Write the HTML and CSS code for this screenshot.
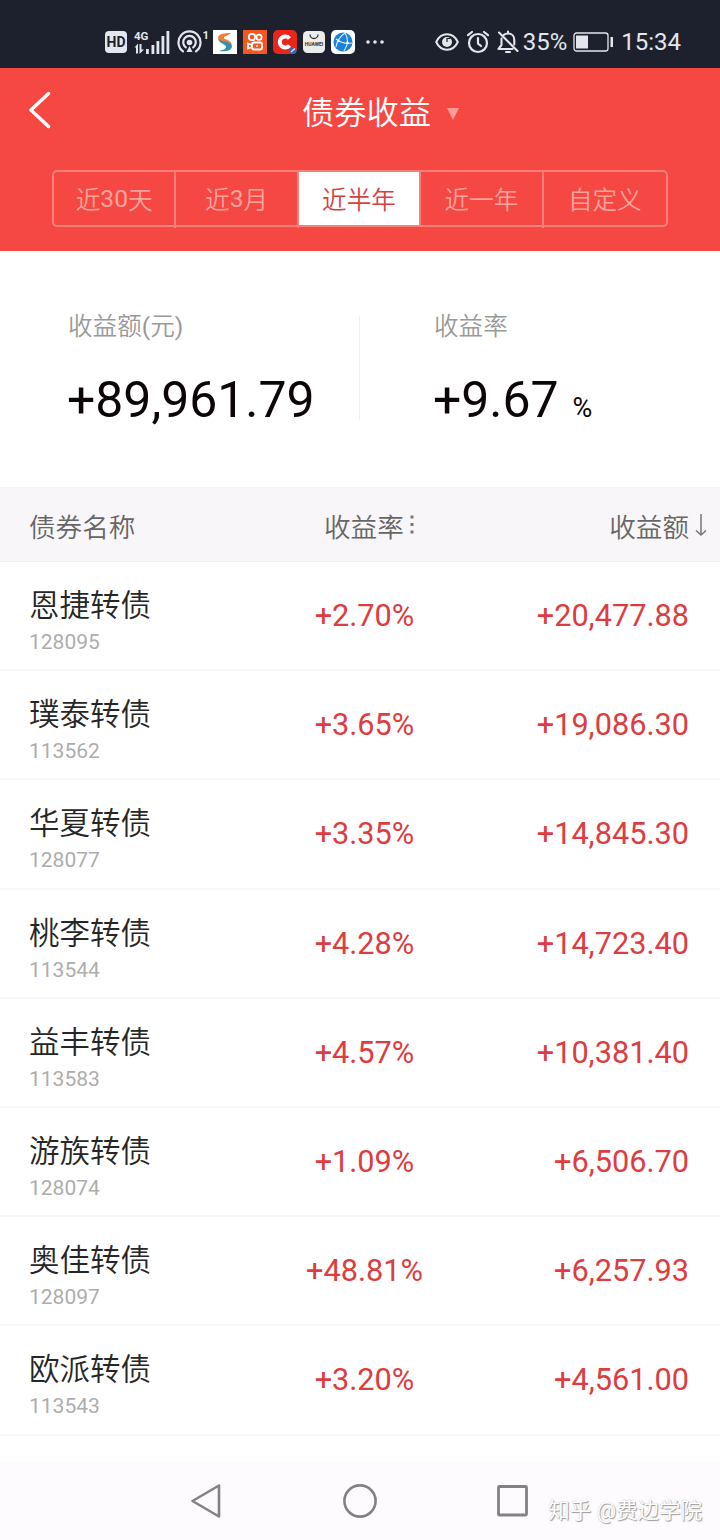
FILE: index.html
```html
<!DOCTYPE html>
<html lang="zh-CN">
<head>
    <meta charset="UTF-8">
    <meta name="viewport" content="width=device-width, initial-scale=1.0">
    <title>债券收益</title>
    <link rel="stylesheet" href="styles.css">
</head>
<body>

    <div class="status-bar">
        <div class="status-left">
            <svg width="22" height="22" viewBox="0 0 22 22">
                <rect width="22" height="22" rx="4" fill="#e4e6ee"/>
                <text x="11" y="16.2" class="hd-text">HD</text>
            </svg>
            <svg class="signal" width="38" height="26" viewBox="0 0 38 26">
                <text x="0" y="10.5" class="net-text">4G</text>
                <g fill="#e4e6ee">
                    <path d="M0.500 18.500L4 14.500V24.500H2V18.500zM5.500 15H7.500v5.500H10L5.500 25z"/>
                    <rect x="12" y="20" width="2.800" height="5"/>
                    <rect x="17.500" y="16" width="2.800" height="9"/>
                    <rect x="22.500" y="12" width="2.800" height="13"/>
                    <rect x="27.500" y="7" width="2.800" height="18"/>
                    <rect x="32.500" y="2" width="2.800" height="23"/>
                </g>
            </svg>
            <svg class="hotspot" width="32" height="26" viewBox="0 0 32 26">
                <g fill="none" stroke="#e4e6ee" stroke-width="2.200" stroke-linecap="round">
                    <path d="M6 22.300a11 11 0 1 1 13 0"/>
                    <path d="M8.800 18.300a6.300 6.300 0 1 1 7.400 0"/>
                </g>
                <circle cx="12.500" cy="13.500" r="2.800" fill="#e4e6ee"/>
                <path d="M12.500 17l3 6h-6z" fill="#e4e6ee"/>
                <text x="25.500" y="10" class="net-text">1</text>
            </svg>
            <svg class="app" width="24" height="24" viewBox="0 0 24 24">
                <rect width="24" height="24" fill="#fff"/>
                <path d="M18 3C11 3 5 4 5 8c0 4 8 3 14 7-1-6-8-5-8-7s4-2 7-5z" fill="#f08038"/>
                <path d="M5 9c4 3 13 2 14 7 0 5-8 6-13 5 4-1 7-2 7-4 0-3-6-3-8-8z" fill="#2f8fae"/>
            </svg>
            <svg class="app" width="24" height="24" viewBox="0 0 24 24">
                <rect width="24" height="24" fill="#f4571f"/>
                <g fill="none" stroke="#fff" stroke-width="1.800">
                    <circle cx="9" cy="7" r="3.200"/>
                    <circle cx="16" cy="7.200" r="2.600"/>
                    <rect x="9" y="12.500" width="10" height="7" rx="2"/>
                    <path d="M9 15l-4-1.500v5L9 17"/>
                </g>
                <circle cx="14" cy="16" r="1" fill="#fff"/>
            </svg>
            <svg class="app" width="24" height="24" viewBox="0 0 24 24">
                <rect width="24" height="24" rx="5" fill="#e8261c"/>
                <path d="M16.500 8.500A5.500 5.500 0 1 0 16.500 15.500" fill="none" stroke="#fff" stroke-width="4"/>
                <circle cx="20" cy="20.500" r="3.500" fill="#3d69b0"/>
                <path d="M18 22l4-3.500" stroke="#d8e4f5" stroke-width="1.200"/>
            </svg>
            <svg class="app" width="22" height="24" viewBox="0 0 22 24">
                <rect y="1" width="22" height="22" rx="4.500" fill="#ececec"/>
                <path d="M7 4.500a4 4 0 0 0 8 0" fill="none" stroke="#333" stroke-width="1.300"/>
                <text x="11" y="16" class="huawei-text">HUAWEI</text>
            </svg>
            <svg class="app" width="24" height="24" viewBox="0 0 24 24">
                <rect width="24" height="24" rx="5" fill="#fff"/>
                <circle cx="12" cy="12" r="9.500" fill="#1b80d8"/>
                <g fill="none" stroke="#d5ecff" stroke-width="1.100">
                    <path d="M14 3C8 7 6 11 5 17M5 9c5 4 10 5 16 4M14 3c4 6 3 12-1 18"/>
                </g>
                <circle cx="7.500" cy="11" r="1.300" fill="#fff"/>
                <circle cx="16.500" cy="13" r="1.300" fill="#fff"/>
            </svg>
            <svg class="more" width="18" height="4" viewBox="0 0 18 4">
                <g fill="#e4e6ee"><circle cx="2" cy="2" r="1.800"/><circle cx="9" cy="2" r="1.800"/><circle cx="16" cy="2" r="1.800"/></g>
            </svg>
        </div>
        <div class="status-right">
            <svg width="24" height="20" viewBox="0 0 24 20">
                <path d="M1.200 10C6 -0.200 18 -0.200 22.800 10 18 20.200 6 20.200 1.200 10z" fill="none" stroke="#e4e6ee" stroke-width="2"/>
                <circle cx="12" cy="10" r="5" fill="#e4e6ee"/>
                <path d="M12 10V6.500h3.500" fill="none" stroke="#1d212d" stroke-width="1.200"/>
            </svg>
            <svg class="alarm" width="24" height="24" viewBox="0 0 24 24">
                <g fill="none" stroke="#e4e6ee" stroke-width="2.200" stroke-linecap="round">
                    <circle cx="12" cy="13" r="9"/>
                    <path d="M12 8v5.500l3 2.500M2 5.200l4-3.200M22 5.200L18 2"/>
                </g>
            </svg>
            <svg class="mute" width="22" height="24" viewBox="0 0 22 24">
                <g fill="none" stroke="#e4e6ee" stroke-width="2.100" stroke-linecap="round" stroke-linejoin="round">
                    <path d="M2 2.500L20.500 21M4.500 8.500v6.500L1.500 19h14M7 4.800C8 3.800 9 3.500 11 3.500c4 0 6.300 3 6.300 6.500v4.500M11 1.500v2M9 22h4"/>
                </g>
            </svg>
            <span class="battery-level">35%</span>
            <svg class="battery" width="41" height="20" viewBox="0 0 41 20">
                <rect x="1" y="1" width="34" height="18" rx="2.500" fill="none" stroke="#e4e6ee" stroke-width="1.300"/>
                <rect x="3" y="3.500" width="12" height="13" fill="#e4e6ee"/>
                <rect x="37.500" y="5" width="2.500" height="10" fill="#e4e6ee"/>
            </svg>
            <span class="clock">15:34</span>
        </div>
    </div>

    <header class="header">
        <div class="title-row">
            <svg class="back" width="22" height="38" viewBox="0 0 22 38">
                <path d="M19.500 2.500L2 19l17.500 16.500" fill="none" stroke="#fff" stroke-width="3.400" stroke-linecap="round" stroke-linejoin="round"/>
            </svg>
            <h1>债券收益</h1>
            <svg class="caret" width="12" height="12" viewBox="0 0 12 12">
                <path d="M0 0h12L6 12z" fill="#fb9c98"/>
            </svg>
        </div>
        <nav class="tabs">
            <a class="tab">近<span>30</span>天</a>
            <a class="tab">近<span>3</span>月</a>
            <a class="tab active">近半年</a>
            <a class="tab">近一年</a>
            <a class="tab">自定义</a>
        </nav>
    </header>

    <section class="summary">
        <div class="summary-item">
            <div class="label">收益额<span>(</span>元<span>)</span></div>
            <div class="value">+89,961.79</div>
        </div>
        <div class="summary-item">
            <div class="label">收益率</div>
            <div class="value">+9.67<small>%</small></div>
        </div>
    </section>

    <div class="list-head">
        <span>债券名称</span>
        <span class="head-rate">收益率<svg width="4" height="20" viewBox="0 0 4 20">
            <g fill="#777"><rect x="0.500" y="0.500" width="3" height="3"/><rect x="0.500" y="8" width="3" height="3"/><rect x="0.500" y="15.500" width="3" height="3"/></g>
        </svg></span>
        <span class="head-amount">收益额<svg width="12" height="24" viewBox="0 0 12 24">
            <path d="M6 1v21M1 17.500l5 4.500 5-4.500" fill="none" stroke="#777" stroke-width="1.500"/>
        </svg></span>
    </div>

    <div id="bond-list"></div>

    <footer class="nav-bar">
        <svg width="32" height="36" viewBox="0 0 32 36">
            <path d="M1.500 18L28 2.500v31z" fill="none" stroke="#858085" stroke-width="2.600" stroke-linejoin="round"/>
        </svg>
        <svg width="34" height="36" viewBox="0 0 34 36">
            <circle cx="17" cy="18" r="15.600" fill="none" stroke="#858085" stroke-width="2.600"/>
        </svg>
        <svg width="32" height="36" viewBox="0 0 32 36">
            <rect x="1.500" y="3.500" width="28" height="28.500" rx="1" fill="none" stroke="#858085" stroke-width="2.800"/>
        </svg>
        <span class="watermark">知乎 @费边学院</span>
    </footer>

<script>
const bonds = [
    { name: "恩捷转债", code: "128095", rate: "+2.70%", amount: "+20,477.88" },
    { name: "璞泰转债", code: "113562", rate: "+3.65%", amount: "+19,086.30" },
    { name: "华夏转债", code: "128077", rate: "+3.35%", amount: "+14,845.30" },
    { name: "桃李转债", code: "113544", rate: "+4.28%", amount: "+14,723.40" },
    { name: "益丰转债", code: "113583", rate: "+4.57%", amount: "+10,381.40" },
    { name: "游族转债", code: "128074", rate: "+1.09%", amount: "+6,506.70" },
    { name: "奥佳转债", code: "128097", rate: "+48.81%", amount: "+6,257.93" },
    { name: "欧派转债", code: "113543", rate: "+3.20%", amount: "+4,561.00" }
];

const list = document.getElementById("bond-list");
bonds.forEach(bond => {
    list.insertAdjacentHTML("beforeend", `
        <div class="bond">
            <div class="bond-info">
                <div class="bond-name">${bond.name}</div>
                <div class="bond-code">${bond.code}</div>
            </div>
            <div class="bond-rate">${bond.rate}</div>
            <div class="bond-amount">${bond.amount}</div>
        </div>`);
});
</script>

</body>
</html>
```

FILE: styles.css
```css
* {
    box-sizing: border-box;
}

body {
    margin: 0;
    height: 1540px;
    display: flex;
    flex-direction: column;
    background: #fff;
    font-family: Roboto, "Noto Sans CJK SC", sans-serif;
    font-weight: 350;
    overflow: hidden;
}

svg {
    display: block;
    flex: none;
}

/* status bar */
.status-bar {
    height: 68px;
    padding: 15px 39px 0 105px;
    background: #1d212d;
    color: #e4e6ee;
    display: flex;
    justify-content: space-between;
}

.status-left,
.status-right {
    height: 53px;
    display: flex;
    align-items: center;
}

.signal {
    margin-left: 7px;
}

.hotspot {
    margin-left: 5px;
    margin-right: 4px;
}

.app {
    margin-right: 6px;
}

.more {
    margin-left: 5px;
}

.hd-text {
    font: 700 14px Roboto, sans-serif;
    fill: #1d212d;
    text-anchor: middle;
}

.net-text {
    font: 700 11.500px Roboto, sans-serif;
    fill: #e4e6ee;
}

.huawei-text {
    font: 700 5px Roboto, sans-serif;
    fill: #333;
    text-anchor: middle;
}

.alarm {
    margin-left: 7px;
}

.mute {
    margin-left: 7px;
}

.battery-level,
.clock {
    font-size: 24px;
    font-weight: 400;
}

.battery-level {
    margin-left: 4px;
}

.battery {
    margin: 0 7px 0 6px;
}

/* red header */
.header {
    height: 183px;
    background: #f64843;
}

.title-row {
    height: 85px;
    padding: 0 29px;
    display: grid;
    grid-template-columns: 22px 1fr 22px;
    align-items: center;
    position: relative;
    color: #fff;
}

.back {
    margin-top: -2px;
}

.title-row h1 {
    margin: -2px 0 0 13px;
    font-size: 32.300px;
    font-weight: 350;
    text-align: center;
}

.caret {
    position: absolute;
    left: 447px;
    top: 40px;
}

.tabs {
    width: 616px;
    height: 57px;
    margin: 17px auto 0 52px;
    border: 2px solid #fa7f7a;
    border-radius: 5px;
    display: grid;
    grid-template-columns: repeat(5, 1fr);
}

.tab {
    height: 56px;
    padding-bottom: 4px;
    display: flex;
    align-items: center;
    justify-content: center;
    border-right: 2px solid #fa7f7a;
    color: #fda39e;
    font-size: 24.600px;
}

.tab span,
.label span {
    font-weight: 400;
}

.tab:last-child {
    border-right: none;
}

.tab.active {
    background: #fff;
    height: 53px;
    padding-bottom: 1px;
    color: #d8403f;
}

/* totals */
.summary {
    height: 236px;
    padding-top: 65px;
    display: grid;
    grid-template-columns: 360px 360px;
}

.summary-item {
    height: 104px;
    padding-left: 68px;
    border-right: 1px solid #f0f0f0;
}

.summary-item:last-child {
    padding-left: 74px;
    border-right: none;
}

.label {
    height: 22px;
    line-height: 21px;
    font-size: 24.600px;
    color: #999;
}

.value {
    margin: 32px 0 0 -1px;
    line-height: 60px;
    font-size: 49.900px;
    font-weight: 400;
    color: #0c0606;
    white-space: nowrap;
}

.value small {
    margin-left: 14px;
    font-size: 27px;
}

/* bond list */
.list-head,
.bond {
    display: grid;
    grid-template-columns: 240px 191px 1fr;
    align-items: center;
    padding-left: 29px;
}

.list-head {
    height: 75px;
    padding-top: 2px;
    background: #f8f6f9;
    border-bottom: 1px solid #f0f0f0;
    color: #666;
    font-size: 26.600px;
}

.head-rate,
.head-amount {
    display: flex;
    align-items: center;
}

.head-rate {
    padding-left: 55px;
}

.head-rate svg {
    margin-left: 6px;
}

.head-amount {
    justify-content: flex-end;
    padding-right: 13px;
}

.head-amount svg {
    margin-left: 6px;
}

.bond {
    height: 109.200px;
    padding-right: 31px;
    border-bottom: 2px solid #f7f7f7;
}

.bond-info {
    padding-top: 8px;
}

.bond-name {
    height: 42px;
    line-height: 43px;
    font-size: 30.500px;
    color: #262626;
}

.bond-code {
    margin-top: 3px;
    line-height: 26px;
    font-size: 21px;
    font-weight: 400;
    color: #adadad;
}

.bond-rate,
.bond-amount {
    font-size: 30.700px;
    font-weight: 400;
    color: #dd3d40;
}

.bond-rate {
    text-align: center;
}

.bond-amount {
    text-align: right;
}

/* system navigation */
.nav-bar {
    position: relative;
    margin-top: auto;
    height: 79px;
    padding: 0 191px;
    display: flex;
    align-items: center;
    justify-content: space-between;
    background: #fdfbfe;
}

.watermark {
    position: absolute;
    right: 18px;
    bottom: 13px;
    font-size: 21.500px;
    line-height: 32px;
    font-weight: 400;
    color: #fff;
    text-shadow: 1px 1px 1px #999, 0 0 1px #bbb;
}
```
